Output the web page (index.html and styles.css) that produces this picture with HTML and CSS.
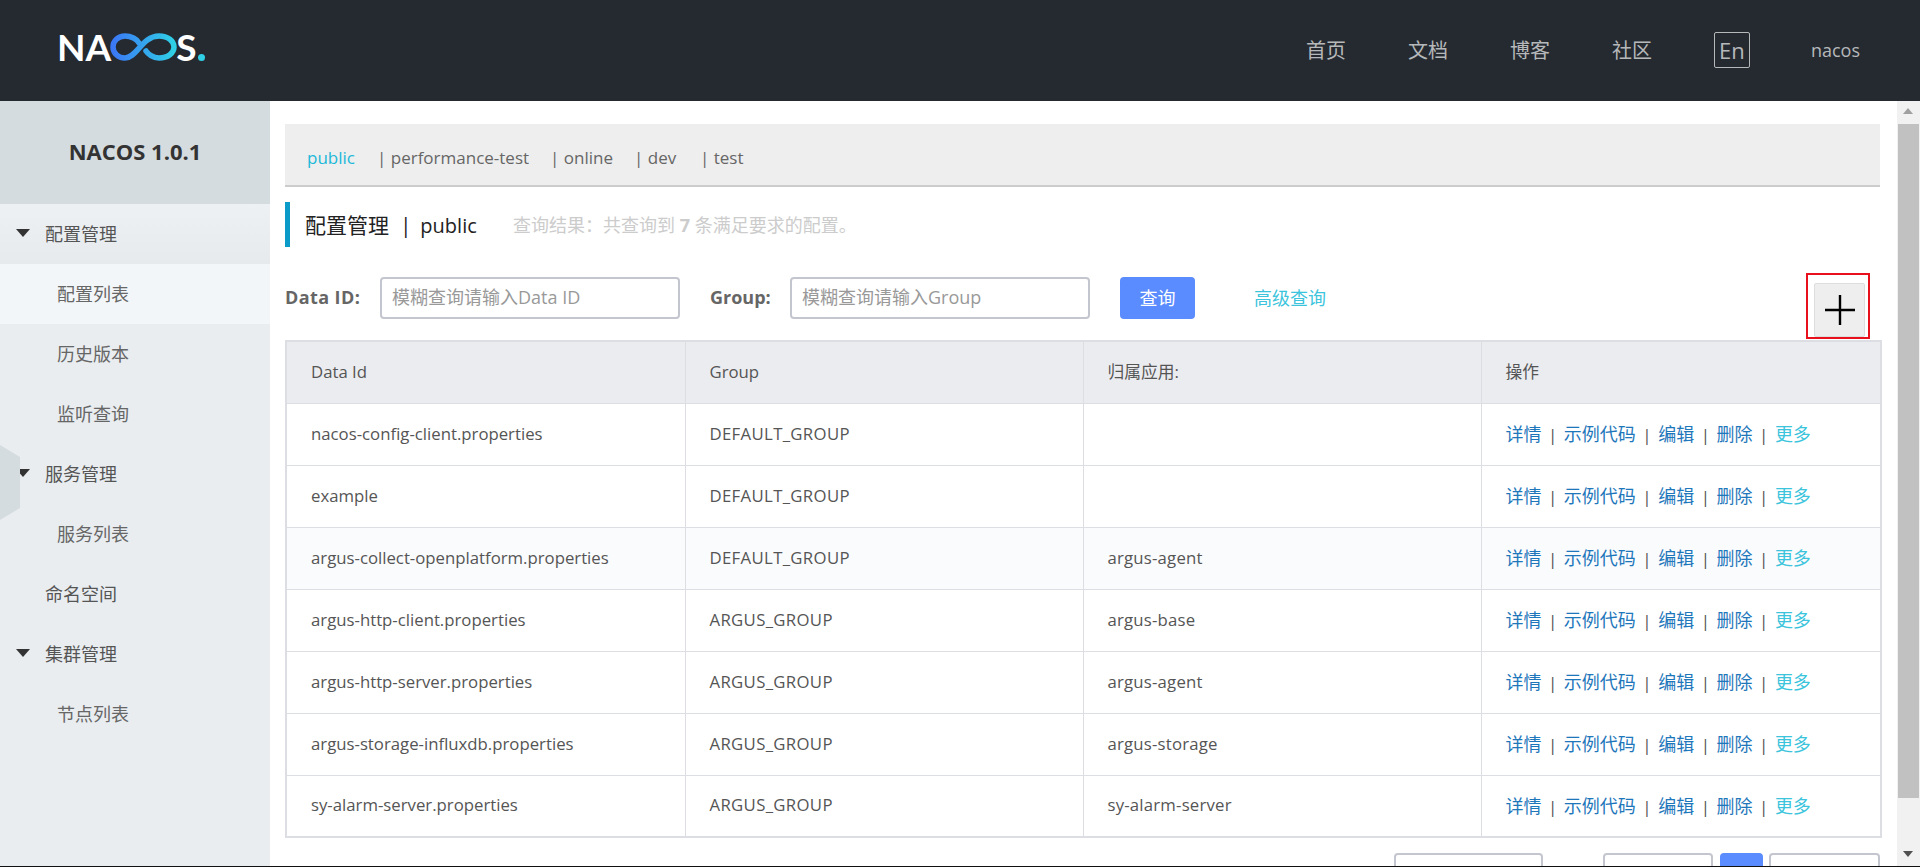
FILE: index.html
```html
<!DOCTYPE html>
<html lang="zh-CN">
<head>
<meta charset="utf-8">
<title>Nacos</title>
<link rel="stylesheet" href="styles.css">
</head>
<body>
<div class="app">
  <header class="topbar">
    <div class="logo">
      <span class="logo-text">NA</span>
      <svg class="logo-mark" viewBox="0 0 67 28" width="67" height="28" aria-hidden="true">
        <defs><linearGradient id="lg" x1="0" x2="1" y1="0" y2="0"><stop offset="0" stop-color="#3b78f5"/><stop offset="1" stop-color="#2fd0e6"/></linearGradient></defs>
        <path d="M29 10C27 6 21 3 15 3C8 3 3 8 3 14C3 20 8 25 15 25C27 25 32 3 49 3C58 3 64 8 64 14C64 20 58 25 49 25C43 25 38 21 36 18" fill="none" stroke="url(#lg)" stroke-width="5.5" stroke-linecap="round"/>
      </svg>
      <span class="logo-text">S</span><span class="logo-dot"></span>
    </div>
    <nav class="topnav">
      <a>首页</a><a>文档</a><a>博客</a><a>社区</a>
      <span class="lang">En</span>
      <span class="user">nacos</span>
    </nav>
  </header>
  <div class="body">
    <aside class="sidebar">
      <div class="brand">NACOS 1.0.1</div>
      <div class="hex"></div>
      <div class="mi parent first"><i class="tri"></i>配置管理</div>
      <div class="mi sub active">配置列表</div>
      <div class="mi sub">历史版本</div>
      <div class="mi sub">监听查询</div>
      <div class="mi parent"><i class="tri"></i>服务管理</div>
      <div class="mi sub">服务列表</div>
      <div class="mi parent">命名空间</div>
      <div class="mi parent"><i class="tri"></i>集群管理</div>
      <div class="mi sub">节点列表</div>
    </aside>
    <main class="main">
      <div class="tabs">
        <span class="tab on">public</span>
        <span class="tab t2">| performance-test</span>
        <span class="tab t3">| online</span>
        <span class="tab t4">| dev</span>
        <span class="tab t5">| test</span>
      </div>
      <div class="title">
        <span class="title-main">配置管理 &nbsp;|&nbsp; <span class="title-ns">public</span></span>
        <span class="title-note">查询结果：共查询到 <b>7</b> 条满足要求的配置。</span>
      </div>
      <div class="toolbar">
        <label class="lbl l1">Data ID:</label>
        <input class="inp" placeholder="模糊查询请输入Data ID">
        <label class="lbl l2">Group:</label>
        <input class="inp" placeholder="模糊查询请输入Group">
        <button class="query">查询</button>
        <a class="adv">高级查询</a>
        <div class="mark"><button class="plus" aria-label="新建"><svg viewBox="0 0 30 30" width="30" height="30"><path d="M15 0V30M0 15H30" stroke="#000" stroke-width="2.4"/></svg></button></div>
      </div>
      <table class="grid">
        <colgroup><col class="c1"><col class="c2"><col class="c2"><col class="c4"></colgroup>
        <thead><tr><th>Data Id</th><th>Group</th><th>归属应用:</th><th>操作</th></tr></thead>
        <tbody>
          <tr><td>nacos-config-client.properties</td><td class="g">DEFAULT_GROUP</td><td class="a"></td><td class="ops"><a>详情</a><s>|</s><a>示例代码</a><s>|</s><a>编辑</a><s>|</s><a>删除</a><s>|</s><a class="more">更多</a></td></tr>
          <tr><td>example</td><td class="g">DEFAULT_GROUP</td><td class="a"></td><td class="ops"><a>详情</a><s>|</s><a>示例代码</a><s>|</s><a>编辑</a><s>|</s><a>删除</a><s>|</s><a class="more">更多</a></td></tr>
          <tr class="hover"><td>argus-collect-openplatform.properties</td><td class="g">DEFAULT_GROUP</td><td class="a">argus-agent</td><td class="ops"><a>详情</a><s>|</s><a>示例代码</a><s>|</s><a>编辑</a><s>|</s><a>删除</a><s>|</s><a class="more">更多</a></td></tr>
          <tr><td>argus-http-client.properties</td><td class="g">ARGUS_GROUP</td><td class="a">argus-base</td><td class="ops"><a>详情</a><s>|</s><a>示例代码</a><s>|</s><a>编辑</a><s>|</s><a>删除</a><s>|</s><a class="more">更多</a></td></tr>
          <tr><td>argus-http-server.properties</td><td class="g">ARGUS_GROUP</td><td class="a">argus-agent</td><td class="ops"><a>详情</a><s>|</s><a>示例代码</a><s>|</s><a>编辑</a><s>|</s><a>删除</a><s>|</s><a class="more">更多</a></td></tr>
          <tr><td>argus-storage-influxdb.properties</td><td class="g">ARGUS_GROUP</td><td class="a">argus-storage</td><td class="ops"><a>详情</a><s>|</s><a>示例代码</a><s>|</s><a>编辑</a><s>|</s><a>删除</a><s>|</s><a class="more">更多</a></td></tr>
          <tr><td>sy-alarm-server.properties</td><td class="g">ARGUS_GROUP</td><td class="a">sy-alarm-server</td><td class="ops"><a>详情</a><s>|</s><a>示例代码</a><s>|</s><a>编辑</a><s>|</s><a>删除</a><s>|</s><a class="more">更多</a></td></tr>
        </tbody>
      </table>
      <div class="pager">
        <span class="pbox sel"></span>
        <span class="pbox prev"></span>
        <span class="pbox cur"></span>
        <span class="pbox next"></span>
      </div>
    </main>
    <div class="sbar">
      <div class="arrow up"></div>
      <div class="thumb"></div>
      <div class="track"></div>
      <div class="arrow down"></div>
    </div>
  </div>
</div>
</body>
</html>
```
FILE: styles.css
```css
* { box-sizing: border-box; }
html, body { margin: 0; height: 867px; overflow: hidden; background: #fff; }
body { font-family: "Open Sans", "Noto Sans CJK SC", sans-serif; font-size: 17px; color: #555; border-bottom: 1px solid #111; }
.app { height: 866px; display: flex; flex-direction: column; overflow: hidden; }

.topbar { height: 101px; flex: none; background: #252a31; display: flex; align-items: center; justify-content: space-between; padding-left: 57px; }
.logo { display: flex; align-items: center; height: 28px; margin-top: -7px; }
.logo-text { font-family: Lato, "Liberation Sans", sans-serif; font-weight: 700; font-size: 37px; line-height: 28px; color: #fff; }
.logo-mark { margin: 0 -1px; }
.logo-dot { width: 7px; height: 7px; border-radius: 50%; background: #2fd0e6; align-self: flex-end; margin-left: 1px; }
.topnav { display: flex; align-items: center; height: 100%; font-size: 20px; color: #b6b8ba; padding: 0 60px 2px 0; }
.topnav a { width: 42px; margin-right: 60px; white-space: nowrap; }
.lang { width: 36px; height: 36px; border: 1px solid #b6b8ba; border-radius: 2px; display: flex; align-items: center; justify-content: center; margin-right: 61px; font-size: 22px; }
.user { font-size: 18px; }

.body { flex: 1; display: flex; min-height: 0; }
.sidebar { width: 270px; flex: none; background: #e9edf0; position: relative; }
.brand { height: 103px; padding-bottom: 4px; background: #d5dce0; display: flex; align-items: center; justify-content: center; font-size: 22px; font-weight: 700; color: #333; }
.hex { position: absolute; z-index: 1; left: 0; top: 344px; width: 20px; height: 75px; background: #d5dce0; clip-path: polygon(0 0, 100% 16%, 100% 84%, 0 100%); }
.mi { height: 60px; display: flex; align-items: center; font-size: 18px; color: #666; position: relative; padding-bottom: 2px; }
.parent { padding-left: 45px; color: #555; }
.sub { padding-left: 57px; }
.first { background: linear-gradient(#eef1f3, #e6eaed); }
.active { background: #f3f6f8; }
.tri { position: absolute; left: 16px; top: 25px; width: 0; height: 0; border-left: 7px solid transparent; border-right: 7px solid transparent; border-top: 8px solid #333; }

.main { flex: 1; min-width: 0; padding: 23px 17px 0 15px; overflow: hidden; }
.tabs { height: 63px; background: #eee; border-bottom: 2px solid #ccc; display: flex; align-items: center; padding: 6px 0 0 22px; font-size: 17px; color: #666; }
.tab { white-space: nowrap; }
.tab.on { color: #1cb8d8; width: 70px; }
.t2 { width: 173px; }
.t3 { width: 84px; }
.t4 { width: 66px; }

.title { height: 45px; margin-top: 15px; border-left: 5px solid #0a9bc9; padding: 0 0 2px 15px; display: flex; align-items: center; }
.title-main { font-size: 21px; color: #222; width: 208px; white-space: nowrap; }
.title-ns { font-size: 20px; margin-left: -2px; }
.title-note { font-size: 18px; color: #ccc; }

.toolbar { height: 67px; margin-top: 26px; display: flex; align-items: flex-start; }
.lbl { font-weight: 700; font-size: 18px; color: #666; height: 42px; margin-top: 4px; padding-bottom: 2px; display: flex; align-items: center; }
.l1 { width: 95px; letter-spacing: 0.4px; }
.l2 { width: 80px; margin-left: 30px; }
.inp { width: 300px; height: 42px; margin-top: 4px; border: 2px solid #c4c6cf; border-radius: 4px; padding: 0 10px 2px; font: 18px "Open Sans", "Noto Sans CJK SC", sans-serif; color: #555; background: #fff; outline: none; }
.inp::placeholder { color: #999; opacity: 1; }
.query { width: 75px; height: 42px; margin: 4px 0 0 30px; padding: 0 0 2px; border: 0; border-radius: 4px; background: #5a8cff; color: #fff; font: 18px "Open Sans", "Noto Sans CJK SC", sans-serif; }
.adv { margin: 4px 0 0 59px; height: 42px; padding-bottom: 2px; display: flex; align-items: center; font-size: 18px; color: #3bc4dc; }
.mark { margin: 0 10px 0 auto; width: 64px; height: 66px; border: 2px solid #e8101c; padding: 8px 3px 0 6px; }
.plus { width: 51px; height: 54px; padding: 0; background: #eee; border: 1px solid #ddd; border-radius: 2px; display: flex; align-items: center; justify-content: center; }
.plus svg { display: block; }

.grid { width: 1595px; table-layout: fixed; border-collapse: collapse; border: 2px solid #dcdee3; font-size: 16.75px; color: #555; }
.c1 { width: 399px; }
.c2 { width: 398px; }
.c4 { width: 400px; }
.grid tr { height: 62px; }
.grid th, .grid td { border: 1px solid #dcdee3; padding: 0 0 2px 24px; text-align: left; font-weight: 400; white-space: nowrap; }
.grid th { background: #ebecf0; }
.grid td.g { letter-spacing: 0.33px; }
.grid td.a { letter-spacing: 0.2px; }
.hover td { background: #fafbfd; }
.grid td.ops { font-size: 18px; }
.ops a { color: #1f77bb; }
.ops a.more { color: #3bc4dc; }
.ops s { text-decoration: none; color: #555; margin: 0 6.5px; font-size: 17px; }

.pager { display: flex; margin-top: 15px; height: 42px; }
.pbox { height: 42px; border: 2px solid #c4c6cf; border-radius: 4px; background: #fff; }
.sel { width: 149px; margin-left: 1109px; }
.prev { width: 110px; margin-left: 60px; }
.cur { width: 43px; margin-left: 7px; background: #5a8cff; border-color: #5a8cff; }
.next { width: 111px; margin-left: 6px; }

.sbar { width: 23px; flex: none; background: #f1f1f1; display: flex; flex-direction: column; align-items: center; }
.arrow { flex: none; height: 23px; width: 23px; position: relative; }
.arrow::after { content: ""; position: absolute; left: 6px; width: 0; height: 0; border-left: 5px solid transparent; border-right: 5px solid transparent; }
.up::after { top: 7px; border-bottom: 6px solid #a0a0a0; }
.down::after { top: 8px; border-top: 6px solid #505050; }
.thumb { width: 21px; height: 674px; background: #c1c1c1; flex: none; }
.track { flex: 1; }
```
